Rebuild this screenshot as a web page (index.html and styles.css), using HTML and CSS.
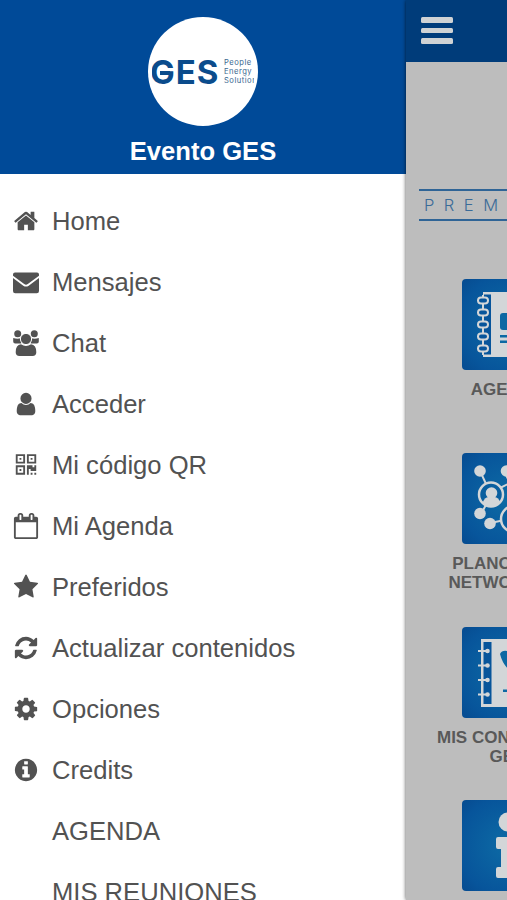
FILE: index.html
```html
<!DOCTYPE html>
<html lang="es">
<head>
    <meta charset="UTF-8">
    <meta name="viewport" content="width=device-width, initial-scale=1.0">
    <title>Evento GES</title>
    <link rel="stylesheet" href="styles.css">
</head>
<body>
<!-- side menu -->
<nav class="drawer">
    <div class="profile">
        <div class="avatar">
            <div class="logo">
                <span class="logoName">GES</span>
                <span class="logoText">People<br>Energy<br>Solutions</span>
            </div>
        </div>
        <div class="eventName">Evento GES</div>
    </div>

    <ul class="menu">
        <li>
            <svg viewBox="0 0 1792 1792"><path d="M1472 992v480q0 26-19 45t-45 19h-384v-384h-256v384h-384q-26 0-45-19t-19-45v-480q0-1 .5-3t.5-3l575-474 575 474q1 2 1 6zm223-69l-62 74q-8 9-21 11h-3q-13 0-21-7l-692-577-692 577q-12 8-24 7-13-2-21-11l-62-74q-8-10-7-23.5t11-21.5l719-599q32-26 76-26t76 26l244 204v-195q0-14 9-23t23-9h192q14 0 23 9t9 23v408l219 182q10 8 11 21.5t-7 23.5z"/></svg>
            <span>Home</span>
        </li>
        <li>
            <svg viewBox="0 0 26 26">
                <path d="M2 3.600h22q2 0 2 2v1.200l-11.200 8.300q-1.800 1.200-3.600 0l-11.200-8.300v-1.200q0-2 2-2z"/>
                <path d="M0 9l10.300 7.700q2.700 1.800 5.400 0l10.300-7.700v13q0 2.200-2.200 2.200h-21.600q-2.200 0-2.200-2.200z"/>
            </svg>
            <span>Mensajes</span>
        </li>
        <li>
            <svg viewBox="0 0 26 26">
                <circle cx="4.700" cy="3.700" r="3.500"/>
                <circle cx="21.300" cy="3.700" r="3.500"/>
                <path d="M.2 8q4.500 1.500 8 0v5.400h-6q-2 0-2-2zM25.800 8q-4.500 1.500-8 0v5.400h6q2 0 2-2z"/>
                <circle class="head" cx="13" cy="9" r="5.600"/>
                <path d="M8 14.300q5 3.400 10 0q5.300 .4 5.300 8q0 3.700-3.700 3.700h-13.200q-3.700 0-3.700-3.700q0-7.600 5.300-8z"/>
            </svg>
            <span>Chat</span>
        </li>
        <li>
            <svg viewBox="0 0 1792 1792"><path d="M1536 1399q0 109-62.5 187t-150.5 78h-854q-88 0-150.5-78t-62.5-187q0-85 8.5-160.5t31.5-152 58.5-131 94-89 134.5-34.5q131 128 313 128t313-128q76 0 134.5 34.5t94 89 58.5 131 31.5 152 8.5 160.5zm-256-887q0 159-112.5 271.5t-271.5 112.5-271.5-112.5-112.5-271.5 112.5-271.5 271.5-112.5 271.5 112.5 112.5 271.5z"/></svg>
            <span>Acceder</span>
        </li>
        <li>
            <svg viewBox="-1.500 -1.200 14 14"><path fill-rule="evenodd" d="M0 0h5v5h-5zM1 1v3h3v-3zM2 2h1v1h-1zM6 0h5v5h-5zM7 1v3h3v-3zM8 2h1v1h-1zM0 6h5v5h-5zM1 7v3h3v-3zM2 8h1v1h-1zM6 6h3v1h1v-1h1v3h-3v-1h-1v3h-1zM8 10h1v1h-1zM10 10h1v1h-1z"/></svg>
            <span>Mi código QR</span>
        </li>
        <li>
            <svg viewBox="0 0 1792 1792"><path d="M192 1664h1408v-1024h-1408v1024zm384-1216v-288q0-14-9-23t-23-9h-64q-14 0-23 9t-9 23v288q0 14 9 23t23 9h64q14 0 23-9t9-23zm768 0v-288q0-14-9-23t-23-9h-64q-14 0-23 9t-9 23v288q0 14 9 23t23 9h64q14 0 23-9t9-23zm384-64v1280q0 52-38 90t-90 38h-1408q-52 0-90-38t-38-90v-1280q0-52 38-90t90-38h128v-96q0-66 47-113t113-47h64q66 0 113 47t47 113v96h384v-96q0-66 47-113t113-47h64q66 0 113 47t47 113v96h128q52 0 90 38t38 90z"/></svg>
            <span>Mi Agenda</span>
        </li>
        <li>
            <svg viewBox="0 0 1792 1792"><path d="M1728 647q0 22-26 48l-363 354 86 500q1 7 1 20 0 21-10.5 35.5t-30.5 14.5q-19 0-40-12l-449-236-449 236q-22 12-40 12-21 0-31.5-14.5t-10.5-35.5q0-6 2-20l86-500-364-354q-25-27-25-48 0-37 56-46l502-73 225-455q19-41 49-41t49 41l225 455 502 73q56 9 56 46z"/></svg>
            <span>Preferidos</span>
        </li>
        <li>
            <svg viewBox="0 0 1792 1792"><path d="M1639 1056q0 5-1 7-64 268-268 434.5t-478 166.5q-146 0-282.5-55t-243.5-157l-129 129q-19 19-45 19t-45-19-19-45v-448q0-26 19-45t45-19h448q26 0 45 19t19 45-19 45l-137 137q71 66 161 102t187 36q134 0 250-65t186-179q11-17 53-117 8-23 30-23h192q13 0 22.5 9.5t9.5 22.5zm25-800v448q0 26-19 45t-45 19h-448q-26 0-45-19t-19-45 19-45l138-138q-148-137-349-137-134 0-250 65t-186 179q-11 17-53 117-8 23-30 23h-199q-13 0-22.5-9.5t-9.5-22.5v-7q65-268 270-434.5t480-166.5q146 0 284 55.5t245 156.5l130-129q19-19 45-19t45 19 19 45z"/></svg>
            <span>Actualizar contenidos</span>
        </li>
        <li>
            <svg viewBox="0 0 1792 1792"><path d="M1152 896q0-106-75-181t-181-75-181 75-75 181 75 181 181 75 181-75 75-181zm512-109v222q0 12-8 23t-20 13l-185 28q-19 54-39 91 35 50 107 138 10 12 10 25t-9 23q-27 37-99 108t-94 71q-12 0-26-9l-138-108q-44 23-91 38-16 136-29 186-7 28-36 28h-222q-14 0-24.5-8.5t-11.5-21.5l-28-184q-49-16-90-37l-141 107q-10 9-25 9-14 0-25-11-126-114-165-168-7-10-7-23 0-12 8-23 15-21 51-66.5t54-70.5q-27-50-41-99l-183-27q-13-2-21-12.5t-8-23.5v-222q0-12 8-23t19-13l186-28q14-46 39-92-40-57-107-138-10-12-10-24 0-10 9-23 26-36 98.5-107.5t94.5-71.5q13 0 26 10l138 107q44-23 91-38 16-136 29-186 7-28 36-28h222q14 0 24.5 8.5t11.5 21.5l28 184q49 16 90 37l142-107q9-9 24-9 13 0 25 10 129 119 165 170 7 8 7 22 0 12-8 23-15 21-51 66.5t-54 70.5q26 50 41 98l183 28q13 2 21 12.5t8 23.5z"/></svg>
            <span>Opciones</span>
        </li>
        <li>
            <svg viewBox="0 0 1792 1792"><path d="M1152 1376v-160q0-14-9-23t-23-9h-96v-512q0-14-9-23t-23-9h-320q-14 0-23 9t-9 23v160q0 14 9 23t23 9h96v320h-96q-14 0-23 9t-9 23v160q0 14 9 23t23 9h448q14 0 23-9t9-23zm-128-896v-160q0-14-9-23t-23-9h-192q-14 0-23 9t-9 23v160q0 14 9 23t23 9h192q14 0 23-9t9-23zm640 416q0 209-103 385.5t-279.5 279.5-385.5 103-385.5-103-279.5-279.5-103-385.5 103-385.5 279.5-279.5 385.5-103 385.5 103 279.5 279.5 103 385.5z"/></svg>
            <span>Credits</span>
        </li>
        <li class="noIcon"><span>AGENDA</span></li>
        <li class="noIcon"><span>MIS REUNIONES</span></li>
    </ul>
</nav>

<!-- page behind the menu -->
<main class="page">
    <header class="topBar">
        <div class="burger"><i></i><i></i><i></i></div>
    </header>
    <div class="banner"><span>PREMIUM</span></div>
    <div class="tiles">
        <div class="tile">
            <svg class="tileIcon" viewBox="0 0 91 91">
                <path class="light" d="M21 13h58v65h-58z"/>
                <path class="blue" d="M22 15h7v61h-7z"/>
                <path class="line" d="M21 16v60M29 14.500h-8M29 76.500h-8"/>
                <g class="ring">
                    <rect x="16" y="18.500" width="10" height="6" rx="3"/>
                    <rect x="16" y="30.500" width="10" height="6" rx="3"/>
                    <rect x="16" y="42.500" width="10" height="6" rx="3"/>
                    <rect x="16" y="54.500" width="10" height="6" rx="3"/>
                    <rect x="16" y="66.500" width="10" height="6" rx="3"/>
                </g>
                <rect class="bright" x="38" y="34" width="32" height="17" rx="3"/>
                <path class="bright" d="M38 56h32v2.500h-32zM38 61.500h32v2.500h-32z"/>
            </svg>
            <span>AGENDA</span>
        </div>
        <div class="tile">
            <svg class="tileIcon" viewBox="0 0 91 91">
                <path class="line" d="M18 18l7 15M25 50l-6 11M28 70l15-3M38 35l8-4M42 18l6 12"/>
                <g class="light">
                    <circle cx="18" cy="18" r="5.800"/>
                    <circle cx="44.500" cy="18" r="5.800"/>
                    <circle cx="18" cy="60.500" r="5.800"/>
                    <circle cx="28" cy="70.500" r="5.800"/>
                </g>
                <circle class="node" cx="29" cy="41.500" r="12"/>
                <circle class="node" cx="52" cy="66" r="13"/>
                <circle class="light" cx="29.500" cy="40" r="5.800"/>
                <path class="light" d="M20.500 50q2-6 6-6h6q4 0 6 6q-9 7-18 0z"/>
                <circle class="light" cx="52" cy="63" r="6"/>
            </svg>
            <span>PLANO SALA<br>NETWORKING</span>
        </div>
        <div class="tile">
            <svg class="tileIcon" viewBox="0 0 91 91">
                <path class="light" d="M19 12h60v68h-60z"/>
                <path class="blue" d="M21.500 15h8v62h-8z"/>
                <path class="line" d="M16 24h10M16 38.500h10M16 53h10M16 67.500h10"/>
                <g class="light">
                    <circle cx="25.500" cy="24" r="2.300"/>
                    <circle cx="25.500" cy="38.500" r="2.300"/>
                    <circle cx="25.500" cy="53" r="2.300"/>
                    <circle cx="25.500" cy="67.500" r="2.300"/>
                </g>
                <path class="bright" d="M38 27q2-4 7-3h16q5-1 7 3l-12 18h-6q-9-6-12-18zM41 62.500h24v2.500h-24z"/>
            </svg>
            <span>MIS CONTACTOS<br>GES</span>
        </div>
        <div class="tile">
            <svg class="tileIcon" viewBox="0 0 91 91">
                <circle class="light" cx="46" cy="22" r="9.500"/>
                <path class="light" d="M36 37h19v30h2q2 0 2 2v7q0 2-2 2h-21q-2 0-2-2v-7q0-2 2-2h3v-18h-3q-2 0-2-2v-8q0-2 2-2z"/>
            </svg>
        </div>
    </div>
</main>
</body>
</html>
```
FILE: styles.css
```css
* {
    margin: 0;
    padding: 0;
    box-sizing: border-box;
}

body {
    display: flex;
    height: 900px;
    overflow: hidden;
    background-color: #fff;
    font-family: "Liberation Sans", Arial, sans-serif;
}

/* side menu */
.drawer {
    flex: none;
    width: 406px;
    height: 900px;
    overflow: hidden;
}

.profile {
    height: 174px;
    padding-top: 17px;
    display: flex;
    flex-direction: column;
    align-items: center;
    background-color: #004a98;
}

.avatar {
    width: 110px;
    height: 109px;
    padding: 0 4px;
    display: flex;
    align-items: center;
    border-radius: 50%;
    background-color: #fff;
}

.logo {
    width: 102px;
    display: flex;
    align-items: center;
    overflow: hidden;
    color: #0b4c8c;
}

.logoName {
    flex: none;
    position: relative;
    margin-left: -2px;
    width: 74px;
    font-family: Inter, "Liberation Sans", sans-serif;
    font-size: 33px;
    line-height: 36px;
    font-weight: 700;
    letter-spacing: 1px;
}

/* long bar of the G */
.logoName::after {
    content: "";
    position: absolute;
    left: 10px;
    top: 17px;
    width: 10px;
    height: 4px;
    background-color: #0b4c8c;
}

.logoText {
    font-family: Inter, "Liberation Sans", sans-serif;
    font-size: 7.6px;
    line-height: 9px;
    letter-spacing: 0.5px;
    color: #39678f;
}

.eventName {
    margin-top: 10px;
    font-size: 25.6px;
    line-height: 30px;
    font-weight: bold;
    color: #fff;
}

.menu {
    padding: 16.5px 0 0 13px;
    list-style: none;
}

.menu li {
    height: 61px;
    display: flex;
    align-items: center;
    gap: 13px;
    font-size: 25.6px;
    color: #525252;
    white-space: nowrap;
}

.menu svg {
    width: 26px;
    height: 26px;
    fill: #525252;
}

.menu .head {
    stroke: #fff;
    stroke-width: 1;
}

.menu .noIcon {
    padding-left: 39px;
}

/* page behind the menu */
.page {
    flex: 1;
    min-width: 0;
    height: 900px;
    overflow: hidden;
    background-color: #bdbdbd;
    box-shadow: 0 0 4px rgba(0, 0, 0, 0.7);
}

.topBar {
    height: 62px;
    padding: 17px 0 0 15px;
    background-color: #003c7a;
}

.burger {
    width: 32px;
    display: flex;
    flex-direction: column;
    gap: 5px;
}

.burger i {
    height: 5.5px;
    border-radius: 1.5px;
    background-color: #cfd2d4;
}

.banner {
    width: 190px;
    height: 32px;
    margin: 127px 0 0 13px;
    padding-left: 5px;
    border-top: 2px solid #2f6496;
    border-bottom: 2px solid #2f6496;
    font-family: Inter, "Liberation Sans", sans-serif;
    font-size: 16.5px;
    font-weight: 300;
    line-height: 29px;
    letter-spacing: 9.5px;
    color: #3a6b98;
}

.tiles {
    width: 203px;
    margin-top: 58.3px;
    display: grid;
    grid-auto-rows: 173.7px;
}

.tile {
    display: flex;
    flex-direction: column;
    align-items: center;
    gap: 10px;
    font-size: 17px;
    line-height: 19px;
    font-weight: bold;
    text-align: center;
    color: #595959;
}

.tileIcon {
    flex: none;
    width: 91px;
    height: 91px;
    border-radius: 4px;
    background: radial-gradient(circle, #0d6ba5 0%, #07559b 75%, #064b90 100%);
}

.light {
    fill: #d3d6d8;
}

.blue {
    fill: #07559b;
}

.bright {
    fill: #0d68a3;
}

.line {
    fill: none;
    stroke: #d3d6d8;
    stroke-width: 2;
}

.ring {
    fill: #07559b;
    stroke: #d3d6d8;
    stroke-width: 2;
}

.node {
    fill: #0a5f9f;
    stroke: #d3d6d8;
    stroke-width: 2.5;
}
```
